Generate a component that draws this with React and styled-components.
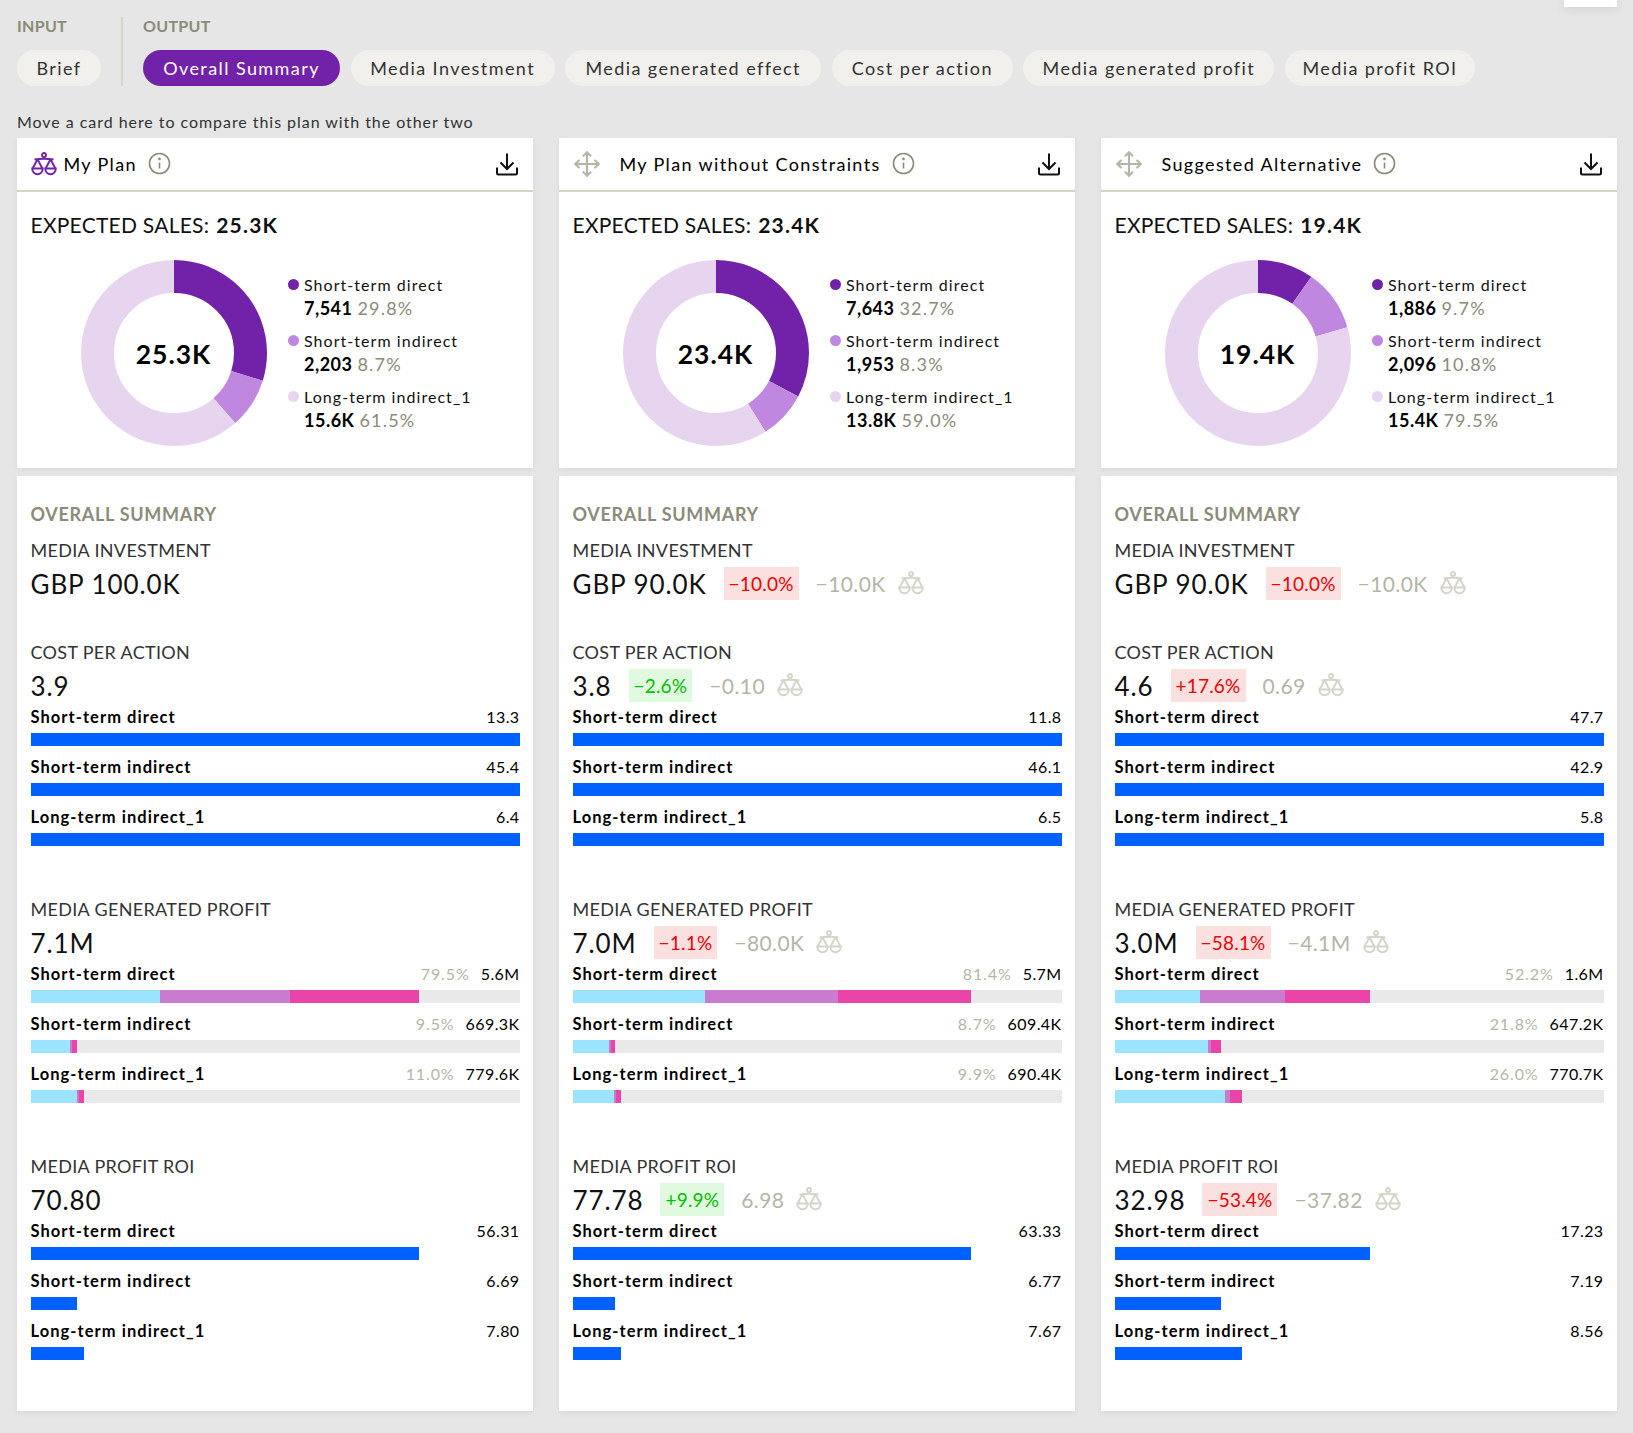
import styled, { createGlobalStyle } from "styled-components";
import { Move } from "lucide-react";

const GlobalStyle = createGlobalStyle`
  html, body {
    margin: 0;
    padding: 0;
    background: #e6e6e6;
    font-family: Lato, "Noto Sans", sans-serif;
    color: #000;
  }
  * { box-sizing: border-box; }
`;

const Page = styled.div`
  position: relative;
  width: 1633px;
  height: 1433px;
  padding: 17px 16px 0 17px;
  overflow: hidden;
`;

const TopTab = styled.div`
  position: absolute;
  top: 0;
  right: 16px;
  width: 53px;
  height: 7px;
  background: #fff;
  box-shadow: 0 2px 10px rgba(0, 0, 0, 0.12);
`;

const Nav = styled.nav`
  display: flex;
  height: 69px;
`;

const NavGroup = styled.div`
  display: flex;
  flex-direction: column;
  justify-content: space-between;
  padding-right: ${(p) => (p.$first ? "20px" : "0")};
  margin-right: ${(p) => (p.$first ? "20px" : "0")};
  border-right: ${(p) => (p.$first ? "2px solid #d4d4c8" : "none")};
`;

const NavLabel = styled.div`
  font-size: 16px;
  line-height: 18px;
  font-weight: 700;
  letter-spacing: 0.3px;
  color: #8b8b78;
`;

const Pills = styled.div`
  display: flex;
  gap: 10.6px;
`;

const Pill = styled.div`
  display: flex;
  align-items: center;
  justify-content: center;
  height: 36px;
  width: ${(p) => p.$w}px;
  border-radius: 18px;
  font-size: 18px;
  letter-spacing: 1.42px;
  background: ${(p) => (p.$active ? "#7222a8" : "#f1f0ec")};
  color: ${(p) => (p.$active ? "#fff" : "#333")};
`;

const Hint = styled.div`
  margin-top: 27px;
  height: 17px;
  font-size: 16px;
  line-height: 17px;
  letter-spacing: 0.95px;
  color: #333;
`;

const Columns = styled.div`
  display: grid;
  grid-template-columns: repeat(3, 516px);
  gap: 26px;
  margin-top: 8px;
`;

const Column = styled.div`
  display: flex;
  flex-direction: column;
  gap: 8px;
`;

const Card = styled.section`
  background: #fff;
  box-shadow: 0 2px 6px rgba(0, 0, 0, 0.06);
`;

const CardHead = styled.header`
  display: flex;
  align-items: center;
  height: 54px;
  padding: 0 14px 0 13.5px;
  border-bottom: 2px solid #d4d4c8;
`;

const PlanName = styled.span`
  font-size: 18px;
  letter-spacing: 1.35px;
  margin-left: ${(p) => p.$ml}px;
`;

const InfoIcon = styled.svg`
  margin-left: 11px;
  margin-top: -2px;
`;

const DownloadIcon = styled.svg`
  margin-left: auto;
`;

const SalesBody = styled.div`
  height: 276px;
  padding: 21px 14px 0 13.5px;
`;

const SalesTitle = styled.div`
  font-size: 21px;
  line-height: 24px;
  letter-spacing: 0.25px;
  color: #111;
  strong {
    font-weight: 700;
    margin-left: 7px;
    letter-spacing: 1.2px;
  }
`;

const SalesRow = styled.div`
  display: flex;
  margin-top: 23px;
  padding-left: 50px;
`;

const Donut = styled.div`
  position: relative;
  width: 186px;
  height: 186px;
  flex: none;
`;

const DonutText = styled.div`
  position: absolute;
  inset: 0;
  display: flex;
  align-items: center;
  justify-content: center;
  font-size: 26.5px;
  font-weight: 700;
  letter-spacing: 1px;
  padding-top: 2px;
`;

const Legend = styled.div`
  margin-left: 21.5px;
  padding-top: 13px;
  display: flex;
  flex-direction: column;
  gap: 9px;
`;

const LegendName = styled.div`
  position: relative;
  padding-left: 16px;
  font-size: 16px;
  line-height: 24px;
  letter-spacing: 1.05px;
  color: #111;
  &::before {
    content: "";
    position: absolute;
    left: 0;
    top: 6px;
    width: 11px;
    height: 11px;
    border-radius: 50%;
    background: ${(p) => p.$color};
  }
`;

const LegendValue = styled.div`
  padding-left: 16px;
  font-size: 18px;
  line-height: 23px;
  font-weight: 700;
  letter-spacing: 0.5px;
  span {
    font-weight: 400;
    color: #8b8b78;
    letter-spacing: 1.2px;
    margin-left: 5px;
  }
`;

const SummaryBody = styled.div`
  height: 935px;
  padding: 27px 13.5px 0;
`;

const SummaryTitle = styled.div`
  font-size: 18px;
  line-height: 22px;
  font-weight: 700;
  letter-spacing: 0.7px;
  color: #8b8b78;
  margin-bottom: 14px;
`;

const Metric = styled.div`
  height: ${(p) => (p.$plain ? "102px" : "257px")};
`;

const MetricLabel = styled.div`
  font-size: 18px;
  line-height: 22px;
  letter-spacing: 0.32px;
  color: #333;
`;

const ValueLine = styled.div`
  display: flex;
  align-items: center;
  height: 34px;
  margin-top: 5px;
`;

const Value = styled.div`
  font-size: 26px;
  letter-spacing: 0.9px;
  color: #111;
  margin-right: 17px;
  padding-top: 1px;
`;

const Delta = styled.div`
  height: 33px;
  padding: 0 5px;
  display: flex;
  align-items: center;
  font-size: 19px;
  letter-spacing: 0.2px;
  margin-right: 17px;
  background: ${(p) => (p.$good ? "#e0fae0" : "#fbe0e0")};
  color: ${(p) => (p.$good ? "#00c000" : "#f00000")};
`;

const Diff = styled.div`
  font-size: 21px;
  letter-spacing: 0.4px;
  color: #b5b5a5;
  margin-right: 12px;
`;

const Row = styled.div`
  height: 50px;
  padding-top: 3px;
`;

const RowText = styled.div`
  display: flex;
  align-items: baseline;
  height: 24px;
  line-height: 24px;
  font-size: 16px;
  letter-spacing: 0.4px;
`;

const RowName = styled.span`
  font-weight: 700;
  font-size: 16.5px;
  letter-spacing: 1.05px;
  margin-right: auto;
`;

const RowPct = styled.span`
  color: #b5b5a5;
  letter-spacing: 0.9px;
  margin-right: 11px;
`;

const Track = styled.div`
  display: flex;
  height: 13px;
  margin-top: 4px;
  background: ${(p) => (p.$empty ? "#e9e9e9" : "transparent")};
`;

const Seg = styled.div`
  height: 100%;
  background: ${(p) => p.$color};
`;

const PURPLE = "#7222a8";
const MID = "#bf87e0";
const PALE = "#e7d5f0";
const BLUE = "#0061ff";
const SKY = "#9ce3ff";
const ORCHID = "#c97ccf";
const PINK = "#ea44a8";

function Balance({ color = "#d4d4c8" }) {
  return (
    <svg width="26" height="24" viewBox="0 0 26 24" fill="none" stroke={color} strokeWidth="1.9">
      <circle cx="13" cy="3" r="2" />
      <path d="M3.5 7.5c3-.6 6-.8 9.5-.8s6.500.2 9.500.8" />
      <path d="M6.500 7.300 1.600 16.500M6.500 7.300l4.900 9.200M19.500 7.300l-4.900 9.200M19.500 7.300l4.900 9.200" />
      <path d="M1.200 16.500h10.600a5.300 5.800 0 0 1-10.600 0ZM14.200 16.500h10.600a5.300 5.800 0 0 1-10.600 0Z" />
    </svg>
  );
}

function Info() {
  return (
    <InfoIcon width="23" height="23" viewBox="0 0 23 23" fill="none" stroke="#8b8b78" strokeWidth="1.6">
      <circle cx="11.5" cy="11.5" r="10" />
      <path d="M11.500 10.500v6" />
      <circle cx="11.500" cy="7" r="0.6" fill="#8b8b78" />
    </InfoIcon>
  );
}

function Download() {
  return (
    <DownloadIcon width="24" height="24" viewBox="0 0 24 24" fill="none" stroke="#111" strokeWidth="2">
      <path d="M12 1.500v15M5.500 10.500 12 17l6.500-6.500" />
      <path d="M2 15.500V21a1.500 1.500 0 0 0 1.500 1.500h17A1.500 1.500 0 0 0 22 21v-5.500" />
    </DownloadIcon>
  );
}

function Ring({ pcts }) {
  const r = 76.5;
  const c = 2 * Math.PI * r;
  const colors = [PURPLE, MID, PALE];
  let acc = 0;
  return (
    <svg width="186" height="186" viewBox="0 0 186 186">
      {pcts.map((p, i) => {
        const dash = (p / 100) * c;
        const el = (
          <circle
            key={i}
            cx="93"
            cy="93"
            r={r}
            fill="none"
            stroke={colors[i]}
            strokeWidth="33"
            strokeDasharray={`${dash} ${c - dash}`}
            strokeDashoffset={-acc}
            transform="rotate(-90 93 93)"
          />
        );
        acc += dash;
        return el;
      })}
    </svg>
  );
}

const NAMES = ["Short-term direct", "Short-term indirect", "Long-term indirect_1"];

const plans = [
  {
    name: "My Plan",
    mine: true,
    total: "25.3K",
    legend: [["7,541", "29.8%", 29.8], ["2,203", "8.7%", 8.7], ["15.6K", "61.5%", 61.5]],
    invest: { value: "GBP 100.0K" },
    cost: { value: "3.9", rows: ["13.3", "45.4", "6.4"] },
    profit: {
      value: "7.1M",
      rows: [
        ["79.5%", "5.6M", [26.5, 26.5, 26.5]],
        ["9.5%", "669.3K", [8.1, 0.4, 1]],
        ["11.0%", "779.6K", [9.6, 0.4, 1]],
      ],
    },
    roi: { value: "70.80", rows: [["56.31", 79.5], ["6.69", 9.5], ["7.80", 11]] },
  },
  {
    name: "My Plan without Constraints",
    total: "23.4K",
    legend: [["7,643", "32.7%", 32.7], ["1,953", "8.3%", 8.3], ["13.8K", "59.0%", 59]],
    invest: { value: "GBP 90.0K", delta: "−10.0%", diff: "−10.0K" },
    cost: { value: "3.8", delta: "−2.6%", good: true, diff: "−0.10", rows: ["11.8", "46.1", "6.5"] },
    profit: {
      value: "7.0M",
      delta: "−1.1%",
      diff: "−80.0K",
      rows: [
        ["81.4%", "5.7M", [27.15, 27.15, 27.1]],
        ["8.7%", "609.4K", [7.4, 0.4, 0.9]],
        ["9.9%", "690.4K", [8.5, 0.4, 1]],
      ],
    },
    roi: { value: "77.78", delta: "+9.9%", good: true, diff: "6.98", rows: [["63.33", 81.4], ["6.77", 8.7], ["7.67", 9.9]] },
  },
  {
    name: "Suggested Alternative",
    total: "19.4K",
    legend: [["1,886", "9.7%", 9.7], ["2,096", "10.8%", 10.8], ["15.4K", "79.5%", 79.5]],
    invest: { value: "GBP 90.0K", delta: "−10.0%", diff: "−10.0K" },
    cost: { value: "4.6", delta: "+17.6%", diff: "0.69", rows: ["47.7", "42.9", "5.8"] },
    profit: {
      value: "3.0M",
      delta: "−58.1%",
      diff: "−4.1M",
      rows: [
        ["52.2%", "1.6M", [17.4, 17.4, 17.4]],
        ["21.8%", "647.2K", [19.2, 0.5, 2.1]],
        ["26.0%", "770.7K", [22.6, 1, 2.4]],
      ],
    },
    roi: { value: "32.98", delta: "−53.4%", diff: "−37.82", rows: [["17.23", 52.2], ["7.19", 21.8], ["8.56", 26]] },
  },
];

function MetricHead({ label, data }) {
  return (
    <>
      <MetricLabel>{label}</MetricLabel>
      <ValueLine>
        <Value>{data.value}</Value>
        {data.delta && <Delta $good={data.good}>{data.delta}</Delta>}
        {data.diff && <Diff>{data.diff}</Diff>}
        {data.diff && <Balance />}
      </ValueLine>
    </>
  );
}

function PlanColumn({ plan }) {
  return (
    <Column>
      <Card>
        <CardHead>
          {plan.mine ? <Balance color={PURPLE} /> : <Move size={28} color="#b5b5a5" strokeWidth={1.8} />}
          <PlanName $ml={plan.mine ? 7 : 19}>{plan.name}</PlanName>
          <Info />
          <Download />
        </CardHead>
        <SalesBody>
          <SalesTitle>
            EXPECTED SALES:<strong>{plan.total}</strong>
          </SalesTitle>
          <SalesRow>
            <Donut>
              <Ring pcts={plan.legend.map((l) => l[2])} />
              <DonutText>{plan.total}</DonutText>
            </Donut>
            <Legend>
              {plan.legend.map((l, i) => (
                <div key={i}>
                  <LegendName $color={[PURPLE, MID, PALE][i]}>{NAMES[i]}</LegendName>
                  <LegendValue>
                    {l[0]}
                    <span>{l[1]}</span>
                  </LegendValue>
                </div>
              ))}
            </Legend>
          </SalesRow>
        </SalesBody>
      </Card>
      <Card>
        <SummaryBody>
          <SummaryTitle>OVERALL SUMMARY</SummaryTitle>
          <Metric $plain>
            <MetricHead label="MEDIA INVESTMENT" data={plan.invest} />
          </Metric>
          <Metric>
            <MetricHead label="COST PER ACTION" data={plan.cost} />
            {plan.cost.rows.map((v, i) => (
              <Row key={i}>
                <RowText>
                  <RowName>{NAMES[i]}</RowName>
                  {v}
                </RowText>
                <Track>
                  <Seg $color={BLUE} style={{ width: "100%" }} />
                </Track>
              </Row>
            ))}
          </Metric>
          <Metric>
            <MetricHead label="MEDIA GENERATED PROFIT" data={plan.profit} />
            {plan.profit.rows.map((r, i) => (
              <Row key={i}>
                <RowText>
                  <RowName>{NAMES[i]}</RowName>
                  <RowPct>{r[0]}</RowPct>
                  {r[1]}
                </RowText>
                <Track $empty>
                  {[SKY, ORCHID, PINK].map((c, j) => (
                    <Seg key={c} $color={c} style={{ width: `${r[2][j]}%` }} />
                  ))}
                </Track>
              </Row>
            ))}
          </Metric>
          <Metric>
            <MetricHead label="MEDIA PROFIT ROI" data={plan.roi} />
            {plan.roi.rows.map((r, i) => (
              <Row key={i}>
                <RowText>
                  <RowName>{NAMES[i]}</RowName>
                  {r[0]}
                </RowText>
                <Track>
                  <Seg $color={BLUE} style={{ width: `${r[1]}%` }} />
                </Track>
              </Row>
            ))}
          </Metric>
        </SummaryBody>
      </Card>
    </Column>
  );
}

export default function App() {
  return (
    <Page>
      <GlobalStyle />
      <TopTab />
      <Nav>
        <NavGroup $first>
          <NavLabel>INPUT</NavLabel>
          <Pills>
            <Pill $w={84}>Brief</Pill>
          </Pills>
        </NavGroup>
        <NavGroup>
          <NavLabel>OUTPUT</NavLabel>
          <Pills>
            <Pill $w={197} $active>Overall Summary</Pill>
            <Pill $w={204}>Media Investment</Pill>
            <Pill $w={256}>Media generated effect</Pill>
            <Pill $w={181}>Cost per action</Pill>
            <Pill $w={251}>Media generated profit</Pill>
            <Pill $w={190}>Media profit ROI</Pill>
          </Pills>
        </NavGroup>
      </Nav>
      <Hint>Move a card here to compare this plan with the other two</Hint>
      <Columns>
        {plans.map((p) => (
          <PlanColumn key={p.name} plan={p} />
        ))}
      </Columns>
    </Page>
  );
}
